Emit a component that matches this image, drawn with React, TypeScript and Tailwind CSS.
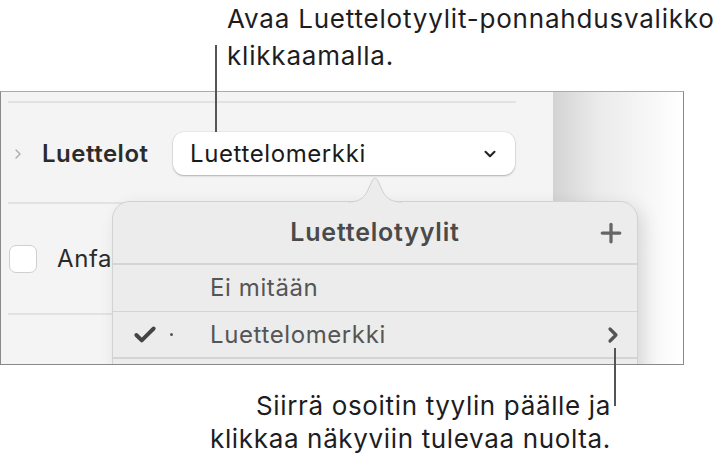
import { Plus, ChevronDown, ChevronRight, Check } from 'lucide-react';

function Divider({ className }: { className: string }) {
  return <div className={`h-[2px] bg-[#e2e2e2] ${className}`} />;
}

export default function App() {
  return (
    <div className="relative h-[460px] w-[724px] overflow-hidden bg-white font-['Inter','Liberation_Sans',sans-serif] text-[#1d1d1f]">
      <div className="pl-[227px] text-[26px] leading-[37px] tracking-[0.8px]">
        <p className="whitespace-nowrap">Avaa Luettelotyylit-ponnahdusvalikko</p>
        <p>klikkaamalla.</p>
      </div>
      <div className="absolute left-[215px] top-[45px] z-20 h-[87px] w-[1.5px] bg-[#555]" />

      <div className="relative mt-[17px] flex h-[274px] w-[684px] overflow-hidden border border-[#8a8a8a] border-t-[#aaa]">
        <div className="flex w-[552px] flex-col bg-[#f4f4f4]">
          <Divider className="ml-[7px] mt-[9px] w-[508px]" />
          <div className="mt-[29px] flex h-[43px] items-center">
            <ChevronRight className="ml-[9px] h-[16px] w-[16px] text-[#aaa]" strokeWidth={2} />
            <span className="ml-[16px] w-[131px] text-[24px] font-semibold tracking-[0.5px] text-[#2b2b2b]">Luettelot</span>
            <div className="flex h-[43px] w-[342px] items-center justify-between rounded-[11px] bg-white pl-[17px] pr-[16px] shadow-[0_1px_2px_rgba(0,0,0,0.25),0_0_0_0.5px_rgba(0,0,0,0.08)]">
              <span className="text-[24px] tracking-[0.6px] text-[#1a1a1a]">Luettelomerkki</span>
              <ChevronDown className="h-[18px] w-[18px] text-[#222]" strokeWidth={2.75} />
            </div>
          </div>
          <Divider className="ml-[7px] mt-[27px] w-[508px]" />
          <div className="mt-[37px] flex items-center">
            <div className="ml-[8px] h-[28px] w-[28px] rounded-[7px] border border-[#cfcfcf] bg-white" />
            <span className="ml-[20px] text-[24px] tracking-[0.6px] text-[#2b2b2b]">Anfa</span>
          </div>
          <Divider className="ml-[7px] mt-[36px] w-[508px]" />
        </div>
        <div className="flex-1 bg-[linear-gradient(90deg,#d3d3d3,#ebebeb_35%,#fff)]" />

        <div className="absolute left-[111px] top-[109px] w-[526px]">
          <svg className="absolute left-[236px] top-[-26px]" width="54" height="28" viewBox="0 0 54 28">
            <path d="M0 27 C10 27 15 24 19 17 L24 6 Q27 0 30 6 L35 17 C39 24 44 27 54 27" fill="#ececec" stroke="#cfcfcf" strokeWidth="1" />
          </svg>
          <div className="rounded-t-[18px] border border-[#d2d2d2] bg-[#ececec] shadow-[6px_6px_18px_rgba(0,0,0,0.12)]">
            <div className="relative flex h-[61px] items-center justify-center">
              <span className="text-[25px] font-semibold tracking-[0.8px] text-[#4a4a4a]">Luettelotyylit</span>
              <Plus className="absolute right-[11px] h-[30px] w-[30px] text-[#666]" strokeWidth={2.6} />
            </div>
            <div className="h-[1.5px] bg-[#d4d4d4]" />
            <div className="flex h-[46px] items-center pl-[97px] text-[24px] tracking-[0.6px] text-[#555]">Ei mitään</div>
            <div className="h-[1.5px] bg-[#d4d4d4]" />
            <div className="flex h-[45px] items-center text-[24px] tracking-[0.6px] text-[#555]">
              <Check className="ml-[19px] h-[26px] w-[26px] text-[#444]" strokeWidth={3.6} />
              <span className="ml-[12px] h-[3px] w-[3px] rounded-full bg-[#555]" />
              <span className="ml-[37px] flex-1">Luettelomerkki</span>
              <ChevronRight className="mr-[12px] h-[24px] w-[24px] text-[#555]" strokeWidth={3.2} />
            </div>
            <div className="h-[1.5px] bg-[#d4d4d4]" />
            <div className="h-[46px]" />
          </div>
        </div>
      </div>

      <div className="absolute left-[614px] top-[348px] z-20 h-[58px] w-[1.5px] bg-[#555]" />
      <div className="mt-[24px] w-[611px] text-right text-[26px] leading-[33px] tracking-[0.65px] text-[#1d1d1f]">
        <p>Siirrä osoitin tyylin päälle ja</p>
        <p>klikkaa näkyviin tulevaa nuolta.</p>
      </div>
    </div>
  );
}
